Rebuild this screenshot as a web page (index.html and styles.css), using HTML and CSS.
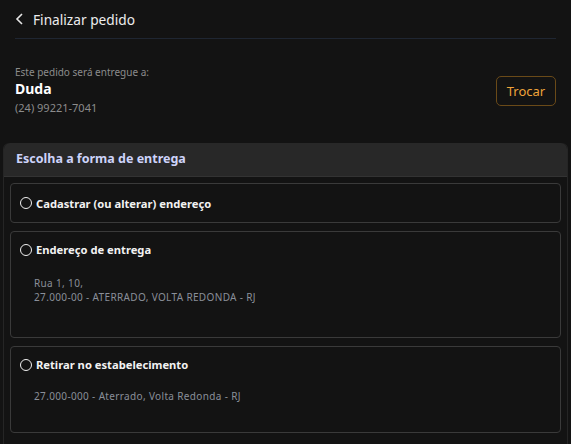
FILE: index.html
```html
<!DOCTYPE html>
<html lang="pt-br">

<head>
    <meta charset="UTF-8">
    <meta name="viewport" content="width=device-width, initial-scale=1.0">
    <title>Finalizar pedido</title>
    <link rel="stylesheet" href="styles.css">
</head>

<body>

    <header class="topo">
        <div class="topo-linha">
            <svg class="voltar" width="10" height="14" viewBox="0 0 10 14">
                <path d="M7 2 L2 7 L7 12" fill="none" stroke="#e6e6e6" stroke-width="1.6" />
            </svg>
            <h1>Finalizar pedido</h1>
        </div>
    </header>

    <section class="cliente">
        <div class="cliente-info">
            <p class="rotulo">Este pedido será entregue a:</p>
            <p class="nome">Duda</p>
            <p class="telefone">(24) 99221-7041</p>
        </div>
        <button class="btn-trocar">Trocar</button>
    </section>

    <section class="entrega">
        <div class="entrega-titulo">Escolha a forma de entrega</div>
        <div class="entrega-opcoes">
            <label class="opcao opcao-curta">
                <span class="radio"></span>
                <span class="opcao-nome">Cadastrar (ou alterar) endereço</span>
            </label>

            <label class="opcao opcao-endereco">
                <div class="opcao-linha">
                    <span class="radio"></span>
                    <span class="opcao-nome">Endereço de entrega</span>
                </div>
                <div class="opcao-texto">
                    Rua 1, 10,<br>
                    27.000-00 - ATERRADO, VOLTA REDONDA - RJ
                </div>
            </label>

            <label class="opcao opcao-retirar">
                <div class="opcao-linha">
                    <span class="radio"></span>
                    <span class="opcao-nome">Retirar no estabelecimento</span>
                </div>
                <div class="opcao-texto">
                    27.000-000 - Aterrado, Volta Redonda - RJ
                </div>
            </label>
        </div>
    </section>

</body>

</html>
```

FILE: styles.css
```css
body {
    margin: 0;
    padding: 0;
    background-color: #131313;
    color: #e6e6e6;
    font-family: "Noto Sans", Arial, sans-serif;
}

p {
    margin: 0;
}

.topo {
    padding: 0 15px;
}

.topo-linha {
    display: flex;
    align-items: center;
    gap: 8px;
    height: 38px;
    border-bottom: 1px solid #1f2632;
}

.voltar {
    display: block;
}

h1 {
    margin: 0;
    font-size: 13.7px;
    font-weight: 400;
    color: #ececec;
}

.cliente {
    display: flex;
    justify-content: space-between;
    align-items: center;
    padding: 26px 15px 0;
}

.rotulo {
    font-size: 10px;
    color: #8c8c8c;
    line-height: 14px;
}

.nome {
    font-size: 14px;
    font-weight: 700;
    color: #fff;
    line-height: 20px;
}

.telefone {
    font-size: 11px;
    color: #8c8c8c;
    line-height: 18px;
}

.btn-trocar {
    width: 60px;
    height: 30px;
    background: transparent;
    border: 1px solid #6a4a18;
    border-radius: 5px;
    color: #eea33a;
    font-family: inherit;
    font-size: 13px;
    cursor: pointer;
}

.entrega {
    margin: 26px 3px 0;
    border: 1px solid #252525;
    border-top: none;
    border-radius: 6px 6px 0 0;
}

.entrega-titulo {
    background-color: #282828;
    border-radius: 6px 6px 0 0;
    height: 33px;
    line-height: 31px;
    padding: 0 12px;
    font-size: 12.5px;
    font-weight: 700;
    color: #cdd3fa;
    border-bottom: 1px solid #333;
}

.entrega-opcoes {
    display: flex;
    flex-direction: column;
    gap: 8px;
    padding: 6px 6px 12px;
}

.opcao {
    display: block;
    border: 1px solid #3a3a3a;
    border-radius: 4px;
    padding: 0 9px;
    box-sizing: border-box;
    cursor: pointer;
}

.opcao-curta {
    display: flex;
    align-items: center;
    gap: 4px;
    height: 40px;
}

.opcao-endereco {
    height: 107px;
    padding-top: 10px;
}

.opcao-retirar {
    height: 87px;
    padding-top: 10px;
}

.opcao-linha {
    display: flex;
    align-items: center;
    gap: 4px;
}

.radio {
    width: 10px;
    height: 10px;
    border: 1px solid #f0f0f0;
    border-radius: 50%;
    flex-shrink: 0;
}

.opcao-nome {
    font-size: 11.2px;
    font-weight: 700;
    color: #f2f2f2;
}

.opcao-texto {
    padding: 0 0 0 14px;
    margin-top: 19px;
    font-size: 10px;
    letter-spacing: 0.35px;
    line-height: 14px;
    color: #8a8f99;
}

.opcao-retirar .opcao-texto {
    margin-top: 17px;
}
```
